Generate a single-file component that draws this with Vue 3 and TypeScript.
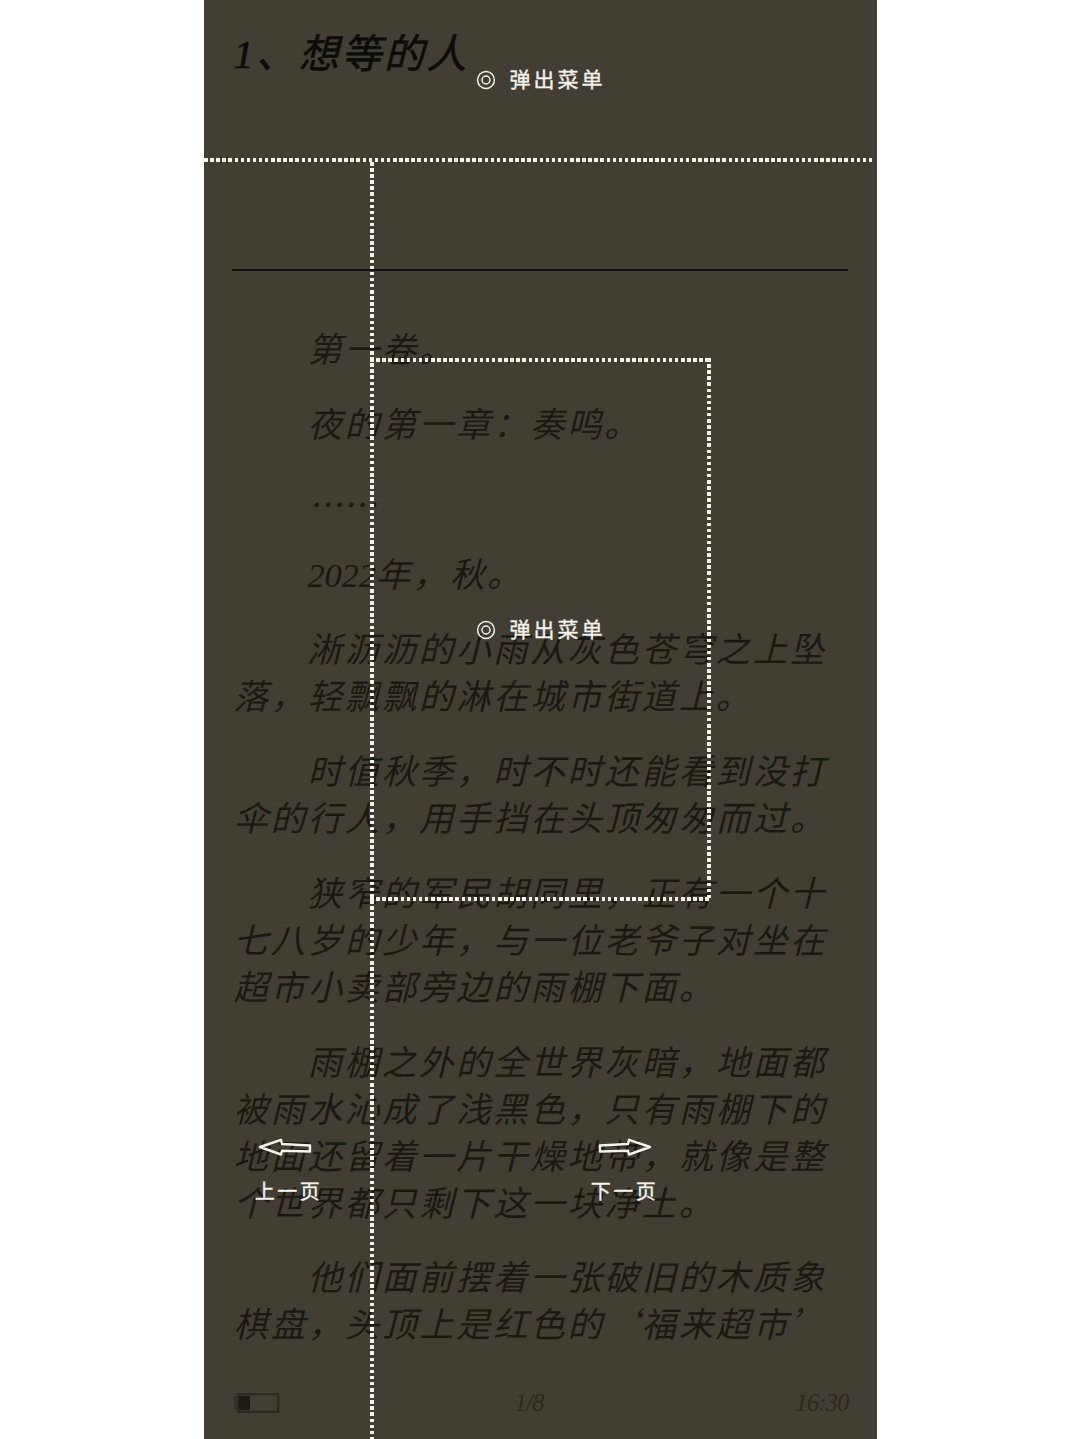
<script setup lang="ts">
interface Para {
  text: string
  lead?: string
  kind?: 'dots' | 'quoted'
}

const paragraphs: Para[] = [
  { text: '第一卷。' },
  { text: '夜的第一章：奏鸣。' },
  { text: '……', kind: 'dots' },
  { lead: '2022', text: '年，秋。' },
  { text: '淅沥沥的小雨从灰色苍穹之上坠落，轻飘飘的淋在城市街道上。' },
  { text: '时值秋季，时不时还能看到没打伞的行人，用手挡在头顶匆匆而过。' },
  { text: '狭窄的军民胡同里，正有一个十七八岁的少年，与一位老爷子对坐在超市小卖部旁边的雨棚下面。' },
  { text: '雨棚之外的全世界灰暗，地面都被雨水沁成了浅黑色，只有雨棚下的地面还留着一片干燥地带，就像是整个世界都只剩下这一块净土。' },
  { text: '他们面前摆着一张破旧的木质象棋盘，头顶上是红色的‘福来超市’', kind: 'quoted' }
]
</script>

<template>
  <div class="page">
    <main class="panel" lang="zh-CN">
      <header class="head">
        <h1 class="title">1、想等的人</h1>
      </header>

      <article class="body">
        <p
          v-for="p in paragraphs"
          :key="p.text"
          class="para"
          :class="p.kind"
        ><span v-if="p.lead" class="lead">{{ p.lead }}</span>{{ p.text }}</p>
      </article>

      <footer class="foot">
        <svg class="battery" width="46" height="20" viewBox="0 0 46 20" aria-hidden="true">
          <rect x="0" y="3" width="5" height="14" fill="#35322a" />
          <rect x="4.2" y="1.2" width="40" height="17.6" fill="none" stroke="#2d2a21" stroke-width="2.4" />
          <rect x="5" y="3" width="11" height="14" fill="#1c1a13" />
        </svg>
        <span class="page-no">1/8</span>
        <span class="clock">16:30</span>
      </footer>

      <!-- guide overlay -->
      <div class="guide h-line"></div>
      <div class="guide v-line"></div>
      <div class="guide box">
        <i class="edge top"></i>
        <i class="edge right"></i>
        <i class="edge bottom"></i>
      </div>

      <div class="menu-tip tip-a">
        <svg width="20" height="20" viewBox="0 0 20 20" aria-hidden="true">
          <circle cx="10" cy="10" r="8.4" fill="none" stroke="#f2f0e8" stroke-width="1.5" />
          <circle cx="10" cy="10" r="4" fill="none" stroke="#f2f0e8" stroke-width="1.5" />
        </svg>
        <span>弹出菜单</span>
      </div>
      <div class="menu-tip tip-b">
        <svg width="20" height="20" viewBox="0 0 20 20" aria-hidden="true">
          <circle cx="10" cy="10" r="8.4" fill="none" stroke="#f2f0e8" stroke-width="1.5" />
          <circle cx="10" cy="10" r="4" fill="none" stroke="#f2f0e8" stroke-width="1.5" />
        </svg>
        <span>弹出菜单</span>
      </div>

      <div class="nav nav-prev">
        <svg width="54" height="18" viewBox="0 0 54 18" aria-hidden="true">
          <path d="M2 9 L23 1.8 L24 6 L52 7.5 L52 13.5 L24 12.8 L23 16.5 Z" fill="none" stroke="#f4f2ea" stroke-width="2.4" stroke-linejoin="round" />
        </svg>
        <span>上一页</span>
      </div>
      <div class="nav nav-next">
        <svg width="54" height="18" viewBox="0 0 54 18" aria-hidden="true">
          <path d="M52 9 L31 1.8 L30 6 L2 7.5 L2 13.5 L30 12.8 L31 16.5 Z" fill="none" stroke="#f4f2ea" stroke-width="2.4" stroke-linejoin="round" />
        </svg>
        <span>下一页</span>
      </div>
    </main>
  </div>
</template>

<style>
html,
body {
  margin: 0;
  background: #ffffff;
}
</style>

<style scoped>
.page {
  display: flex;
  justify-content: center;
  width: 1080px;
  height: 1439px;
  background: #ffffff;
  overflow: hidden;
}

.panel {
  position: relative;
  display: flex;
  flex-direction: column;
  box-sizing: border-box;
  width: 673px;
  height: 1439px;
  padding: 0 29px 0 30px;
  background: #423e34;
  overflow: hidden;
  font-family: "Liberation Serif", "Noto Sans CJK SC", serif;
  font-style: italic;
  color: #17150f;
}

.head {
  box-sizing: border-box;
  flex: none;
  height: 271px;
  margin-left: -2px;
  padding-left: 2px;
  border-bottom: 2px solid #15130e;
}

.title {
  margin: 30px 0 0;
  font-size: 40px;
  line-height: 50px;
  font-weight: 400;
  letter-spacing: 2.6px;
  color: #0c0b08;
  -webkit-text-stroke: 0.6px #0c0b08;
}

.body {
  flex: 1;
  min-height: 0;
  width: 600px;
  padding-top: 56px;
  overflow: hidden;
}

.para {
  margin: 0 0 28px;
  font-size: 34.5px;
  line-height: 47px;
  letter-spacing: 2.6px;
  text-indent: 74px;
  color: #1a1810;
}

.dots {
  padding-top: 3px;
  margin-bottom: 25px;
  font-family: "Noto Sans CJK SC", sans-serif;
  letter-spacing: 0;
}

.quoted {
  margin-top: -4px;
  font-family: "Noto Sans CJK SC", sans-serif;
}

.lead {
  letter-spacing: -0.2px;
}

.foot {
  flex: none;
  display: grid;
  grid-template-columns: 281px auto 1fr;
  align-items: center;
  height: 72px;
  padding-bottom: 1px;
  box-sizing: border-box;
  margin-right: -1px;
  font-size: 25px;
  letter-spacing: -1px;
  color: #2c2920;
}

.battery {
  display: block;
}

.clock {
  justify-self: end;
}

.guide {
  position: absolute;
  --dots-x: repeating-linear-gradient(90deg, #f3f1e9 0 3.5px, transparent 3.5px 6.1px);
  --dots-y: repeating-linear-gradient(180deg, #f3f1e9 0 3.5px, transparent 3.5px 6.1px);
}

.h-line {
  left: 0;
  top: 158px;
  width: 671px;
  height: 4px;
  background: var(--dots-x);
}

.v-line {
  left: 166px;
  top: 162px;
  width: 4px;
  height: 1277px;
  background: var(--dots-y);
}

.box {
  left: 166px;
  top: 358px;
  width: 341px;
  height: 543px;
}

.edge {
  position: absolute;
  display: block;
}

.edge.top,
.edge.bottom {
  left: 0;
  width: 100%;
  height: 4px;
  background: var(--dots-x);
}

.edge.top {
  top: 0;
}

.edge.bottom {
  bottom: 0;
}

.edge.right {
  right: 0;
  top: 0;
  width: 4px;
  height: 100%;
  background: var(--dots-y);
}

.menu-tip {
  position: absolute;
  left: 272px;
  display: flex;
  align-items: flex-start;
  gap: 14px;
  font-family: "Noto Sans CJK SC", sans-serif;
  font-style: normal;
  font-size: 21px;
  line-height: 28px;
  letter-spacing: 3px;
  color: #f4f2ea;
  -webkit-text-stroke: 0.35px #f4f2ea;
}

.menu-tip svg {
  flex: none;
  margin-top: 4px;
}

.menu-tip span {
  margin-top: -2px;
}

.tip-a {
  top: 66px;
}

.tip-b {
  top: 616px;
}

.nav {
  position: absolute;
  top: 1138px;
  display: flex;
  flex-direction: column;
  align-items: center;
  gap: 22px;
  width: 70px;
  font-family: "Noto Sans CJK SC", sans-serif;
  font-style: normal;
  font-size: 20px;
  line-height: 26px;
  letter-spacing: 2.5px;
  color: #f4f2ea;
  -webkit-text-stroke: 0.35px #f4f2ea;
}

.nav svg {
  display: block;
}

.nav-prev {
  left: 50px;
}

.nav-prev svg {
  margin-left: -8px;
}

.nav-next {
  left: 386px;
}
</style>
